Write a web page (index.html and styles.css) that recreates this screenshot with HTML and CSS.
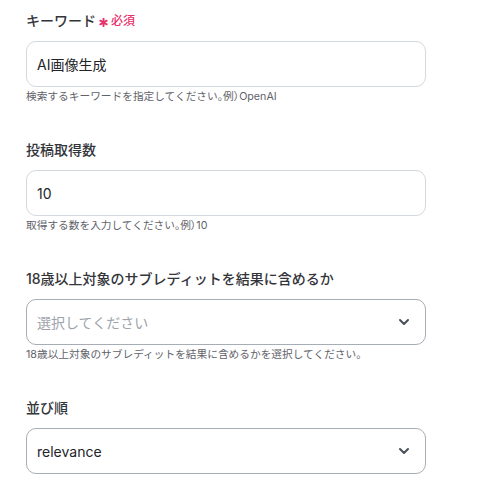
FILE: index.html
```html
<!DOCTYPE html>
<html lang="ja">
<head>
<meta charset="utf-8">
<link rel="stylesheet" href="styles.css">
</head>
<body>
<form class="form">
  <div class="field">
    <div class="label">キーワード<span class="req"><svg class="star" width="9" height="9" viewBox="0 0 10 10"><g stroke="#e5336b" stroke-width="2.2" stroke-linecap="round"><path d="M5 1 V9"/><path d="M1.5 3 L8.5 7"/><path d="M1.5 7 L8.5 3"/></g></svg>必須</span></div>
    <div class="input">AI画像生成</div>
    <div class="help">検索するキーワードを指定してください<span class="tight">。例）</span>OpenAI</div>
  </div>
  <div class="field">
    <div class="label">投稿取得数</div>
    <div class="input">10</div>
    <div class="help">取得する数を入力してください<span class="tight">。例）</span>10</div>
  </div>
  <div class="field">
    <div class="label">18歳以上対象のサブレディットを結果に含めるか</div>
    <div class="input select placeholder"><span>選択してください</span>
      <svg class="chev" width="12" height="8" viewBox="0 0 12 8"><path d="M2 2 L6 6 L10 2" fill="none" stroke="#4a5059" stroke-width="2" stroke-linecap="round" stroke-linejoin="round"/></svg>
    </div>
    <div class="help">18歳以上対象のサブレディットを結果に含めるかを選択してください。</div>
  </div>
  <div class="field last">
    <div class="label">並び順</div>
    <div class="input select"><span>relevance</span>
      <svg class="chev" width="12" height="8" viewBox="0 0 12 8"><path d="M2 2 L6 6 L10 2" fill="none" stroke="#4a5059" stroke-width="2" stroke-linecap="round" stroke-linejoin="round"/></svg>
    </div>
  </div>
</form>
</body>
</html>
```

FILE: styles.css
```css
html, body {
  margin: 0;
  padding: 0;
  background: #ffffff;
}
body {
  font-family: Inter, "Noto Sans CJK JP", sans-serif;
  color: #2b2d31;
}
.form {
  display: flex;
  flex-direction: column;
  padding: 11px 0 0 26px;
  width: 400px;
}
.field {
  display: flex;
  flex-direction: column;
  height: 129px;
}
.field.last {
  height: auto;
}
.label {
  font-size: 14px;
  font-weight: 500;
  line-height: 20px;
  height: 20px;
  display: flex;
  align-items: center;
  color: #33353a;
}
.req {
  color: #e5336b;
  font-size: 12px;
  font-weight: 500;
  margin-left: 3px;
  display: flex;
  align-items: center;
}
.star {
  display: block;
  margin-right: 3px;
  margin-top: 3px;
}
.input {
  margin-top: 10px;
  box-sizing: border-box;
  height: 46px;
  border: 1px solid #d3d7de;
  border-radius: 10px;
  padding: 0 10px;
  display: flex;
  align-items: center;
  font-size: 14px;
  color: #222428;
}
.select {
  border-color: #a7adb5;
  justify-content: space-between;
  padding-right: 15px;
}
.placeholder {
  color: #9ea3ab;
}
.chev {
  display: block;
}
.help {
  margin-top: 2px;
  font-size: 10.7px;
  line-height: 16px;
  color: #5f636a;
}
.tight {
  font-feature-settings: "palt";
}
```
